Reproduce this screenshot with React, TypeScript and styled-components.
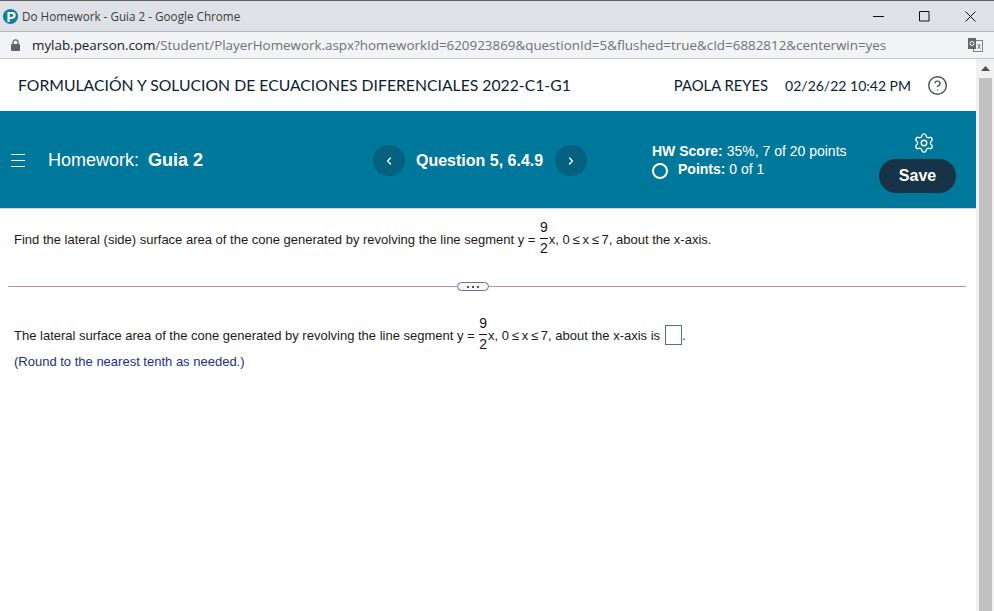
import styled, {createGlobalStyle} from "styled-components";
import {ChevronLeft, ChevronRight, CircleHelp, Settings} from "lucide-react";

const GlobalStyle = createGlobalStyle`
  html, body {
    margin: 0;
    padding: 0;
    height: 100%;
    overflow: hidden;
    background: white;
  }
`

const Window = styled.div`
  width: 994px;
  height: 611px;
  display: flex;
  flex-direction: column;
  overflow: hidden;
`

const TitleBar = styled.div`
  height: 30px;
  flex: none;
  display: flex;
  align-items: center;
  background-color: #dee1e6;
  border-top: 1px solid #5f6062;
  padding-left: 1px;
`

const WindowTitle = styled.div`
  margin-left: 2px;
  font-family: "Open Sans", sans-serif;
  font-size: 11.7px;
  color: #3c3c3c;
  flex: 1;
`

const WindowButton = styled.div`
  width: 46px;
  height: 30px;
  display: flex;
  align-items: center;
  justify-content: center;
`

const WindowButtons = styled.div`
  display: flex;
  margin-right: 1px;
`

const AddressBar = styled.div`
  height: 26px;
  flex: none;
  display: flex;
  align-items: center;
  background-color: #f1f3f4;
  border-top: 1px solid #b4b6b9;
  border-bottom: 1px solid #c4c5c7;
  padding-left: 11px;
`

const Url = styled.div`
  margin-left: 12px;
  font-family: "Open Sans", sans-serif;
  font-size: 13.4px;
  color: #6f7276;
  flex: 1;
  white-space: nowrap;
`

const Host = styled.span`
  color: #202124;
`

const TranslateBox = styled.div`
  width: 15px;
  display: flex;
  margin-right: 11px;
`

const Body = styled.div`
  flex: 1;
  display: flex;
  min-height: 0;
`

const Page = styled.div`
  flex: 1;
  min-width: 0;
  display: flex;
  flex-direction: column;
`

const Scrollbar = styled.div`
  width: 18px;
  flex: none;
  background-color: #f1f1f1;
  display: flex;
  flex-direction: column;
  align-items: center;
`

const ScrollArrow = styled.div`
  height: 18px;
  width: 100%;
  display: flex;
  align-items: center;
  justify-content: center;
`

const ScrollThumb = styled.div`
  flex: 1;
  width: 13px;
  margin-top: 1px;
  background-color: #c1c1c1;
`

const CourseHeader = styled.div`
  height: 52px;
  flex: none;
  display: flex;
  align-items: center;
  padding: 0 28px 0 18px;
  font-family: "Lato", sans-serif;
  font-size: 14.8px;
  color: #0c1c33;
`

const CourseName = styled.div`
  flex: 1;
  margin-bottom: 2px;
  font-size: 15.75px;
  white-space: nowrap;
`

const UserName = styled.div`
  margin-right: 17px;
`

const DateText = styled.div`
  margin-right: 16px;
  font-size: 14px;
`

const Band = styled.div`
  height: 98px;
  flex: none;
  box-sizing: border-box;
  padding-top: 2px;
  display: grid;
  grid-template-columns: 373px 279px 227px 77px;
  align-items: center;
  background-color: #00789b;
  border-bottom: 1px solid #cdd6de;
  color: white;
  font-family: "Liberation Sans", Arial, sans-serif;
`

const BandLeft = styled.div`
  display: flex;
  align-items: center;
  padding-left: 11px;
  font-size: 18px;
`

const HamburgerIcon = styled.div`
  width: 14px;
  height: 13px;
  margin-right: 23px;
  border-top: 1.5px solid white;
  border-bottom: 1.5px solid white;
  box-sizing: border-box;
  display: flex;
  align-items: center;

  &::before {
    content: "";
    display: block;
    width: 100%;
    height: 1.5px;
    background: white;
  }
`

const HomeworkName = styled.b`
  margin-left: 9px;
`

const Nav = styled.div`
  display: flex;
  align-items: center;
  font-size: 16px;
  font-weight: bold;
`

const NavButton = styled.div`
  width: 32px;
  height: 31px;
  border-radius: 50%;
  background-color: #06607f;
  display: flex;
  align-items: center;
  justify-content: center;
`

const QuestionLabel = styled.div`
  margin: 0 11px;
  width: 128px;
  white-space: nowrap;
`

const Score = styled.div`
  font-size: 14px;
  padding-bottom: 1px;
`

const ScoreRow = styled.div`
  display: flex;
  align-items: center;
  height: 18px;
`

const ScoreRing = styled.div`
  width: 16px;
  height: 16px;
  border: 2px solid white;
  border-radius: 50%;
  box-sizing: border-box;
  margin-right: 10px;
  margin-top: 4px;
`

const SaveColumn = styled.div`
  display: flex;
  flex-direction: column;
  align-items: center;
  padding-top: 4px;
`

const Gear = styled(Settings)`
  margin-left: 13px;
`

const SaveButton = styled.div`
  width: 77px;
  height: 34px;
  margin-top: 5px;
  border-radius: 18px;
  background-color: #163347;
  display: flex;
  align-items: center;
  justify-content: center;
  font-size: 16px;
  font-weight: bold;
`

const Content = styled.div`
  padding-top: 7px;
  font-family: "Liberation Sans", Arial, sans-serif;
  font-size: 13px;
  color: #1a1a1a;
`

const MathLine = styled.div`
  height: 46px;
  display: flex;
  align-items: center;
  padding-left: 14px;
  white-space: pre;
`

const AnswerLine = styled(MathLine)`
  height: 38px;
`

const Fraction = styled.span`
  display: inline-flex;
  flex-direction: column;
  align-items: center;
  font-size: 14px;
  line-height: 14px;
  margin: 0 1px 3px;
  color: #111;
`

const FractionTop = styled.span`
  border-bottom: 1px solid #111;
  padding-bottom: 4px;
  margin-bottom: 2px;
`

const Relation = styled.span`
  margin: 0 2.75px;
`

const Divider = styled.div`
  display: flex;
  align-items: center;
  margin: 20px 10px 0 8px;
  height: 9px;
`

const DividerLine = styled.div`
  flex: 1;
  height: 1px;
  background-color: #c48da3;
`

const DividerStart = styled(DividerLine)`
  flex: none;
  width: 449px;
`

const DividerPill = styled.div`
  width: 32px;
  height: 9px;
  box-sizing: border-box;
  border: 1.5px solid #66757f;
  border-radius: 5px;
  display: flex;
  align-items: center;
  justify-content: center;
  gap: 3px;
  background: #f4f6f8;
`

const PillDot = styled.span`
  width: 2px;
  height: 2px;
  background-color: #44535f;
`

const AnswerBlock = styled.div`
  margin-top: 25px;
`

const AnswerBox = styled.span`
  display: inline-block;
  width: 15px;
  height: 18px;
  border: 1px solid #3f6fc4;
  margin-left: 5px;
`

const Hint = styled.div`
  padding-left: 14px;
  color: #1c2f86;
`

const Frac = () => (
    <Fraction>
        <FractionTop>9</FractionTop>
        <span>2</span>
    </Fraction>
)

const Range = () => (
    <>0<Relation>≤</Relation>x<Relation>≤</Relation>7</>
)

const App = () => {
    return (
        <Window>
            <GlobalStyle/>
            <TitleBar>
                <svg width="19" height="19" viewBox="0 0 19 19">
                    <circle cx="9.5" cy="9.5" r="7.6" fill="#0d7fa3"/>
                    <text x="5.5" y="15" fontFamily="Liberation Sans" fontWeight="bold" fontSize="14" fill="#fff">P</text>
                </svg>
                <WindowTitle>Do Homework - Guia 2 - Google Chrome</WindowTitle>
                <WindowButtons>
                    <WindowButton>
                        <svg width="11" height="11" viewBox="0 0 11 11"><path d="M0 5.5h11" stroke="#111" fill="none"/></svg>
                    </WindowButton>
                    <WindowButton>
                        <svg width="11" height="11" viewBox="0 0 11 11"><path d="M.5.5h9.5v9.5H.5z" stroke="#111" fill="none"/></svg>
                    </WindowButton>
                    <WindowButton>
                        <svg width="11" height="11" viewBox="0 0 11 11"><path d="M.5.5l10 10M10.5.5l-10 10" stroke="#111" fill="none"/></svg>
                    </WindowButton>
                </WindowButtons>
            </TitleBar>
            <AddressBar>
                <svg width="9" height="12" viewBox="0 0 9 12">
                    <path d="M2 5V3.4a2.5 2.5 0 0 1 5 0V5" stroke="#5f6368" strokeWidth="1.3" fill="none"/>
                    <rect x="0" y="5" width="9" height="7" rx="1" fill="#5f6368"/>
                </svg>
                <Url>
                    <Host>mylab.pearson.com</Host>/Student/PlayerHomework.aspx?homeworkId=620923869&amp;questionId=5&amp;flushed=true&amp;cId=6882812&amp;centerwin=yes
                </Url>
                <TranslateBox>
                    <svg width="15" height="14" viewBox="0 0 15 14">
                        <rect x="5.5" y="2.5" width="9" height="11" fill="#f3f3f3" stroke="#808080"/>
                        <path d="M0 0h8v11H0z" fill="#666"/>
                        <circle cx="4" cy="5.5" r="2" fill="none" stroke="#fff"/>
                        <path d="M9.5 6l3 5M12.5 6l-3 5" stroke="#808080"/>
                    </svg>
                </TranslateBox>
            </AddressBar>
            <Body>
                <Page>
                    <CourseHeader>
                        <CourseName>FORMULACIÓN Y SOLUCION DE ECUACIONES DIFERENCIALES 2022-C1-G1</CourseName>
                        <UserName>PAOLA REYES</UserName>
                        <DateText>02/26/22 10:42 PM</DateText>
                        <CircleHelp size={21} color="#4a4f55" strokeWidth={1.6}/>
                    </CourseHeader>
                    <Band>
                        <BandLeft>
                            <HamburgerIcon/>
                            Homework:
                            <HomeworkName>Guia 2</HomeworkName>
                        </BandLeft>
                        <Nav>
                            <NavButton><ChevronLeft size={12} color="white" strokeWidth={2.5}/></NavButton>
                            <QuestionLabel>Question 5, 6.4.9</QuestionLabel>
                            <NavButton><ChevronRight size={12} color="white" strokeWidth={2.5}/></NavButton>
                        </Nav>
                        <Score>
                            <ScoreRow><b>HW Score:</b>&nbsp;35%, 7 of 20 points</ScoreRow>
                            <ScoreRow><ScoreRing/><b>Points:</b>&nbsp;0 of 1</ScoreRow>
                        </Score>
                        <SaveColumn>
                            <Gear size={22} color="white" strokeWidth={1.5}/>
                            <SaveButton>Save</SaveButton>
                        </SaveColumn>
                    </Band>
                    <Content>
                        <MathLine>
                            Find the lateral (side) surface area of the cone generated by revolving the line segment y = <Frac/>x, <Range/>, about the x-axis.
                        </MathLine>
                        <Divider>
                            <DividerStart/>
                            <DividerPill><PillDot/><PillDot/><PillDot/></DividerPill>
                            <DividerLine/>
                        </Divider>
                        <AnswerBlock>
                            <AnswerLine>
                                The lateral surface area of the cone generated by revolving the line segment y = <Frac/>x, <Range/>, about the x-axis is<AnswerBox/>.
                            </AnswerLine>
                        </AnswerBlock>
                        <Hint>(Round to the nearest tenth as needed.)</Hint>
                    </Content>
                </Page>
                <Scrollbar>
                    <ScrollArrow>
                        <svg width="9" height="5" viewBox="0 0 9 5"><path d="M4.5 0L9 5H0z" fill="#505050"/></svg>
                    </ScrollArrow>
                    <ScrollThumb/>
                </Scrollbar>
            </Body>
        </Window>
    )
}

export default App
